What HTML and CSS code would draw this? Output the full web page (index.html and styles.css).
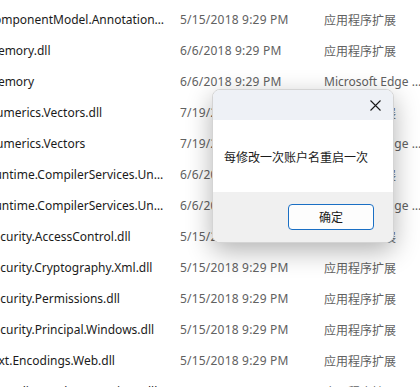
FILE: index.html
```html
<!DOCTYPE html>
<html lang="zh-CN">
<head>
    <meta charset="UTF-8">
    <meta name="viewport" content="width=device-width, initial-scale=1.0">
    <title>文件列表</title>
    <link rel="stylesheet" href="styles.css">
</head>
<body>
    <div class="file-list">
        <div class="row"><span class="name">System.ComponentModel.Annotations.dll</span><span class="date">5/15/2018 9:29 PM</span><span class="type">应用程序扩展</span></div>
        <div class="row"><span class="name">System.Memory.dll</span><span class="date">6/6/2018 9:29 PM</span><span class="type">应用程序扩展</span></div>
        <div class="row"><span class="name">System.Memory</span><span class="date">6/6/2018 9:29 PM</span><span class="type">Microsoft Edge HTML Document</span></div>
        <div class="row"><span class="name">System.Numerics.Vectors.dll</span><span class="date">7/19/2018 9:29 PM</span><span class="type">应用程序扩展</span></div>
        <div class="row"><span class="name">System.Numerics.Vectors</span><span class="date">7/19/2018 9:29 PM</span><span class="type">Microsoft Edge HTML Document</span></div>
        <div class="row"><span class="name">System.Runtime.CompilerServices.Unsafe.dll</span><span class="date">6/6/2018 9:29 PM</span><span class="type">应用程序扩展</span></div>
        <div class="row"><span class="name">System.Runtime.CompilerServices.Unsafe</span><span class="date">6/6/2018 9:29 PM</span><span class="type">Microsoft Edge HTML Document</span></div>
        <div class="row"><span class="name">System.Security.AccessControl.dll</span><span class="date">5/15/2018 9:29 PM</span><span class="type">应用程序扩展</span></div>
        <div class="row"><span class="name">System.Security.Cryptography.Xml.dll</span><span class="date">5/15/2018 9:29 PM</span><span class="type">应用程序扩展</span></div>
        <div class="row"><span class="name">System.Security.Permissions.dll</span><span class="date">5/15/2018 9:29 PM</span><span class="type">应用程序扩展</span></div>
        <div class="row"><span class="name">System.Security.Principal.Windows.dll</span><span class="date">5/15/2018 9:29 PM</span><span class="type">应用程序扩展</span></div>
        <div class="row"><span class="name">System.Text.Encodings.Web.dll</span><span class="date">5/15/2018 9:29 PM</span><span class="type">应用程序扩展</span></div>
        <div class="row"><span class="name">System.Threading.Tasks.Extensions.dll</span><span class="date">5/15/2018 9:29 PM</span><span class="type">应用程序扩展</span></div>
    </div>

    <div class="dialog">
        <div class="dialog-header">
            <button class="close-btn" aria-label="关闭">
                <svg width="11" height="11" viewBox="0 0 11 11">
                    <path d="M0.5 0.5 L10.5 10.5 M10.5 0.5 L0.5 10.5" stroke="#1a1a1a" stroke-width="1.1" fill="none"/>
                </svg>
            </button>
        </div>
        <div class="dialog-body">每修改一次账户名重启一次</div>
        <div class="dialog-footer">
            <button class="ok-btn">确定</button>
        </div>
    </div>
</body>
</html>
```

FILE: styles.css
```css
* {
    box-sizing: border-box;
    margin: 0;
    padding: 0;
}

body {
    font-family: "Noto Sans", "Noto Sans CJK SC", sans-serif;
    font-size: 12px;
    background: #fff;
    color: #1b1b1b;
    width: 420px;
    height: 387px;
    overflow: hidden;
    position: relative;
}

/* 文件列表 */
.file-list {
    padding-top: 4px;
    margin-left: -57px;
}

.row {
    display: flex;
    flex-shrink: 0;
    height: 31px;
    align-items: center;
    white-space: nowrap;
}

.name {
    width: 225px;
    flex-shrink: 0;
    overflow: hidden;
    text-overflow: ellipsis;
    color: #1b1b1b;
}

.date {
    width: 156px;
    flex-shrink: 0;
    padding-left: 12px;
    color: #616161;
    letter-spacing: 0.2px;
}

.type {
    width: 100px;
    flex-shrink: 0;
    overflow: hidden;
    text-overflow: ellipsis;
    color: #616161;
}

/* 对话框 */
.dialog {
    position: absolute;
    left: 212px;
    top: 89px;
    width: 182px;
    border: 1px solid #d4d4d4;
    border-radius: 8px;
    overflow: hidden;
    background: #fff;
    box-shadow: 0 8px 26px rgba(0, 0, 0, 0.3);
}

.dialog-header {
    height: 30px;
    background: #eef1f6;
    display: flex;
    justify-content: flex-end;
    align-items: center;
    padding-right: 8px;
}

.close-btn {
    border: none;
    background: none;
    width: 20px;
    height: 20px;
    display: flex;
    align-items: center;
    justify-content: center;
}

.dialog-body {
    height: 72px;
    padding-left: 11px;
    display: flex;
    align-items: center;
    font-family: "Noto Sans CJK SC", sans-serif;
    color: #1a1a1a;
}

.dialog-footer {
    height: 50px;
    background: #f0f0f0;
    display: flex;
    justify-content: flex-end;
    align-items: center;
    padding-right: 19px;
    padding-bottom: 1px;
}

.ok-btn {
    width: 86px;
    height: 26px;
    background: #fdfdfd;
    border: 1px solid #1a6fc4;
    border-radius: 4px;
    font-family: "Noto Sans CJK SC", sans-serif;
    font-size: 12px;
    color: #1a1a1a;
}
```
